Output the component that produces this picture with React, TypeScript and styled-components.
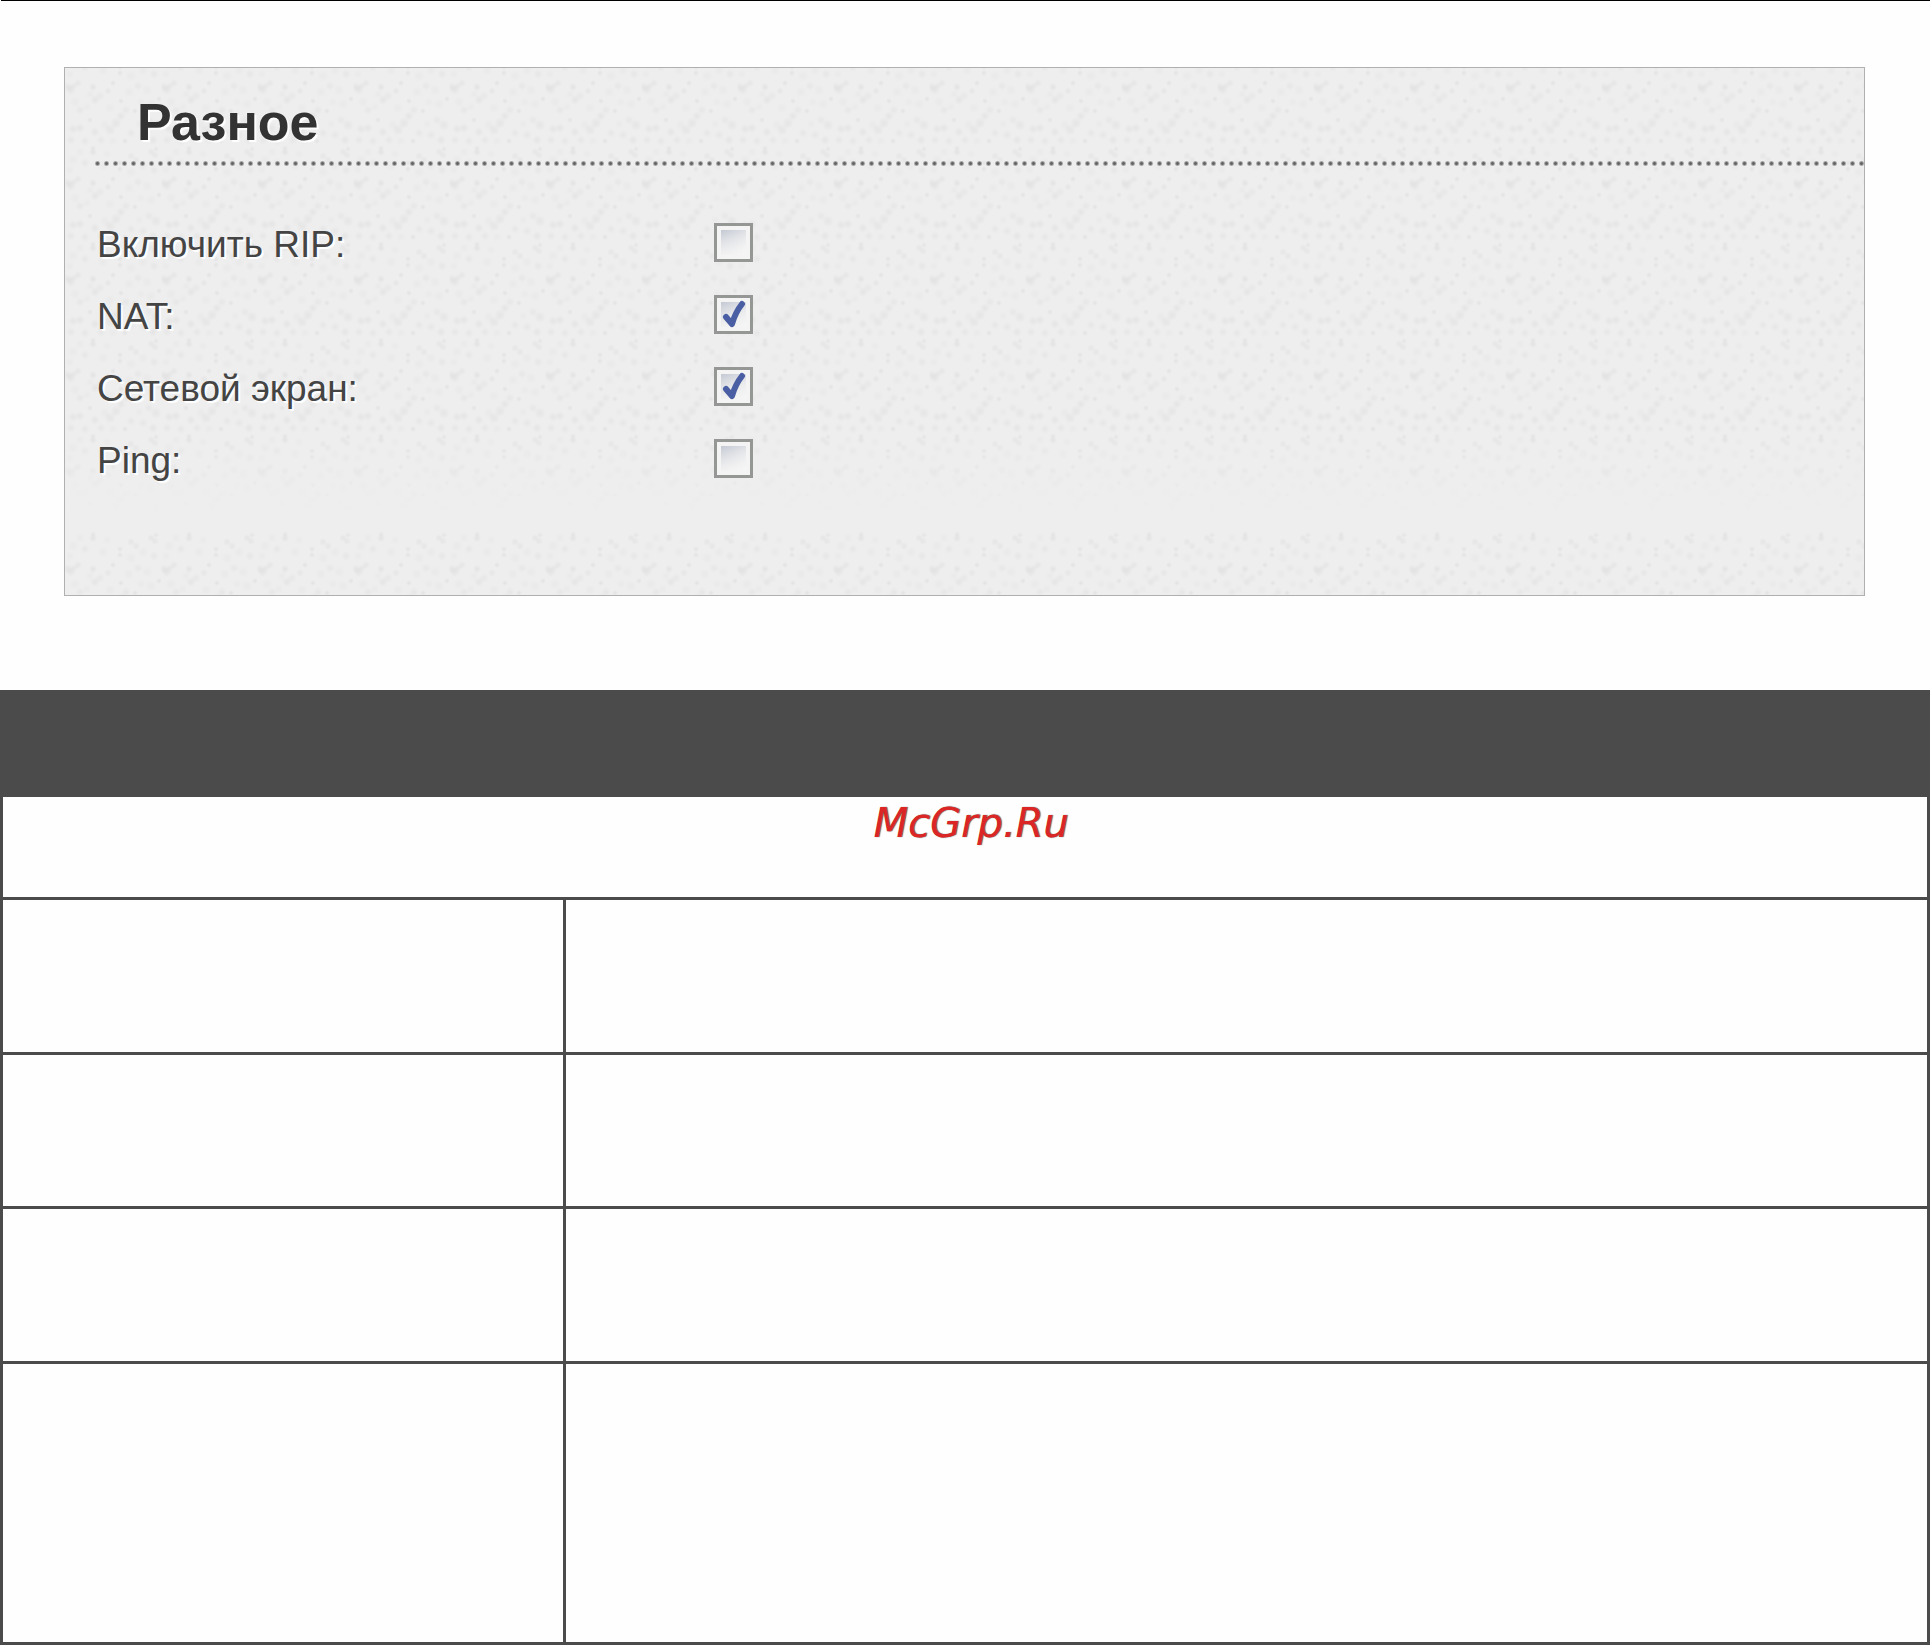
import React from "react";
import styled, { createGlobalStyle } from "styled-components";

const GlobalStyle = createGlobalStyle`
  *, *::before, *::after { box-sizing: border-box; }
  body { margin: 0; background: #fefefe; font-family: "Liberation Sans", Arial, sans-serif; }
`;

/* [x, y, radius, strength in percent] of every speck in the 96px paper tile */
const specks: number[][] = [
  [86, 6, 4, 4], [90, 9, 4, 4], [91, 3, 3, 4], [28, 6, 4, 5], [28, 2, 3, 4], [55, 17, 3, 5],
  [55, 23, 3, 5], [66, 10, 4, 4], [71, 14, 4, 4], [42, 8, 5, 2], [15, 6, 5, 2], [8, 14, 6, 2],
  [20, 17, 5, 3], [38, 20, 6, 2], [78, 20, 6, 2], [89, 24, 5, 3], [5, 24, 5, 2], [66, 26, 6, 2],
  [3, 37, 5, 4], [6, 40, 5, 4], [9, 36, 4, 3], [13, 33, 4, 4], [28, 37, 4, 5], [48, 33, 3, 5],
  [43, 41, 4, 4], [35, 46, 5, 3], [30, 50, 5, 4], [25, 44, 5, 2], [56, 51, 3, 5], [94, 49, 3, 5],
  [64, 42, 6, 2], [73, 36, 5, 3], [82, 40, 6, 2], [86, 54, 6, 2], [76, 52, 5, 2], [10, 52, 6, 2],
  [15, 60, 5, 3], [22, 57, 5, 2], [45, 58, 6, 2], [70, 61, 3, 5], [61, 60, 5, 3], [56, 66, 5, 4],
  [51, 73, 6, 4], [45, 80, 6, 4], [40, 75, 6, 2], [25, 70, 3, 5], [15, 78, 5, 4], [8, 79, 5, 4],
  [30, 82, 5, 4], [91, 75, 6, 4], [84, 70, 5, 3], [78, 85, 5, 3], [66, 83, 5, 3], [60, 91, 3, 5],
  [36, 90, 5, 3], [20, 91, 5, 3], [6, 90, 5, 3], [88, 90, 5, 4], [48, 91, 5, 2], [74, 74, 5, 2],
];

const paper = specks
  .map(([x, y, r, s]) => `radial-gradient(circle at ${x}px ${y}px, rgba(0,0,0,${s / 100}) 0, transparent ${r}px)`)
  .join(",");

const Page = styled.main`
  display: flex;
  flex-direction: column;
`;

const Rule = styled.hr`
  width: calc(100% - 1px);
  height: 1px;
  margin: 0 0 66px auto;
  border: 0;
  background: #000;
`;

const Panel = styled.section`
  margin: 0 65px 94px 64px;
  border: 1px solid #b0b0b0;
  background: #eeeeee;
  color: #333;
  text-shadow: 2px 2px 1px #fff;
`;

const PanelBody = styled.div`
  padding: 0 0 38px 30px;
  background-image: linear-gradient(transparent 370px, #eeeeee 448px), ${paper};
  background-size: 100% 100%, ${specks.map(() => "96px 96px").join(",")};
  background-position: 0 0, ${specks.map(() => "0 -18px").join(",")};
`;

const PanelFoot = styled.div`
  height: 63px;
  background-image: ${paper};
  background-size: 96px 96px;
`;

const Title = styled.h2`
  margin: 0;
  padding: 24px 0 0 42px;
  height: 98px;
  font-size: 52px;
  line-height: 60px;
  font-weight: 700;
  background: radial-gradient(circle, #666 1px, transparent 3px) -2px 100% / 9px 5px repeat-x;
`;

const Fields = styled.div`
  display: grid;
  padding: 40px 0 0 2px;
`;

const Field = styled.label`
  display: grid;
  grid-template-columns: 617px 1fr;
  align-items: center;
  height: 72px;
  font-size: 37px;
  line-height: 40px;
  color: #444;
`;

const Name = styled.span`
  padding-top: 6px;
`;

const Box = styled.span`
  position: relative;
  display: flex;
  width: 39px;
  height: 39px;
`;

const Tick = styled.input`
  appearance: none;
  width: 39px;
  height: 39px;
  margin: 0;
  padding: 4px;
  border: 3px solid #959794;
  background:
    linear-gradient(135deg, rgba(255,255,255,0), #f6f6f6) content-box,
    linear-gradient(#c3c8d2, #ececec) content-box,
    #f4f4f4;
  & + svg { display: none; }
  &:checked + svg { display: block; }
`;

const Mark = styled.svg`
  position: absolute;
  inset: 0;
  pointer-events: none;
`;

const Check = ({ label, on }: { label: string; on: boolean }) => (
  <Field>
    <Name>{label}</Name>
    <Box>
      <Tick type="checkbox" defaultChecked={on} />
      <Mark width="39" height="39" viewBox="0 0 39 39" aria-hidden="true">
        <path
          d="M12 22 L18 29 C20 22 24 14 28 9"
          fill="none"
          stroke="#4a5fa3"
          strokeWidth="6"
          strokeLinejoin="round"
          strokeLinecap="round"
        />
      </Mark>
    </Box>
  </Field>
);

const Grid = styled.table`
  width: 100%;
  table-layout: fixed;
  border-collapse: separate;
  border-spacing: 3px;
  background: #4b4b4b;
`;

const NameCol = styled.col`
  width: 560px;
`;

const Head = styled.th`
  height: 101px;
  padding: 0;
`;

const Cell = styled.td<{ $h: number }>`
  height: ${(p) => p.$h}px;
  padding: 0;
  background: #fefefe;
  vertical-align: top;
`;

const Brand = styled.div`
  padding: 2px 0 0 12px;
  font-family: "DejaVu Sans", sans-serif;
  font-style: italic;
  font-size: 40px;
  line-height: 48px;
  text-align: center;
  color: #dc2626;
  text-shadow: 1px 0 1px #444;
`;

const rows = [152, 151, 152, 278];

export default function App() {
  return (
    <Page>
      <GlobalStyle />
      <Rule />
      <Panel>
        <PanelBody>
          <Title>Разное</Title>
          <Fields>
            <Check label="Включить RIP:" on={false} />
            <Check label="NAT:" on />
            <Check label="Сетевой экран:" on />
            <Check label="Ping:" on={false} />
          </Fields>
        </PanelBody>
        <PanelFoot />
      </Panel>
      <Grid>
        <colgroup>
          <NameCol />
          <col />
        </colgroup>
        <thead>
          <tr>
            <Head />
            <Head />
          </tr>
        </thead>
        <tbody>
          <tr>
            <Cell $h={100} colSpan={2}>
              <Brand>McGrp.Ru</Brand>
            </Cell>
          </tr>
          {rows.map((h, i) => (
            <tr key={i}>
              <Cell $h={h} />
              <Cell $h={h} />
            </tr>
          ))}
        </tbody>
      </Grid>
    </Page>
  );
}
